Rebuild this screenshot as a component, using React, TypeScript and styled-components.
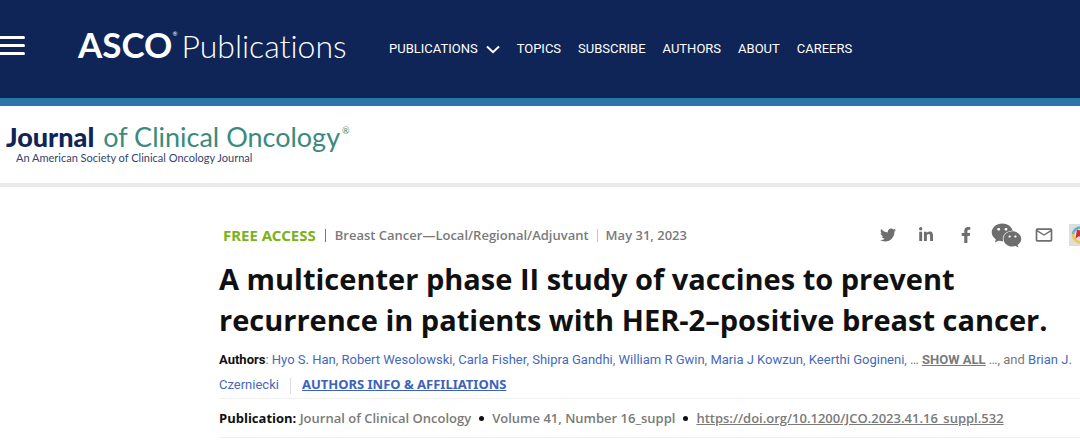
import React from "react";
import styled, { createGlobalStyle } from "styled-components";
import { FaFacebookF, FaLinkedinIn, FaTwitter, FaWeixin } from "react-icons/fa";
import { MdMailOutline } from "react-icons/md";

const humanist = '"Open Sans", "Noto Sans", sans-serif';
const capitals = '"Noto Sans", "Open Sans", sans-serif';
const roboto = 'Roboto, "Liberation Sans", sans-serif';
const geometric = 'Lato, "Open Sans", sans-serif';

const GlobalStyle = createGlobalStyle`
  *, *::before, *::after { box-sizing: border-box; }
  body { margin: 0; background: #fff; color: #7a7a7a; font-family: ${humanist}; overflow-x: hidden; }
  a { color: inherit; text-decoration: none; }
  button { padding: 0; border: 0; background: none; font: inherit; color: inherit; cursor: pointer; }
`;

const TopBar = styled.header`
  display: flex;
  align-items: center;
  min-height: 106px;
  padding-bottom: 8px;
  background: #0f2557;
  border-bottom: 8px solid #2a76a9;
  color: #fff;
`;

const MenuButton = styled.button`
  display: flex;
  flex-direction: column;
  gap: 5px;
  width: 25px;
  margin-right: 53px;
`;

const MenuLine = styled.span`
  height: 3px;
  border-radius: 0 2px 2px 0;
  background: #fff;
`;

const Brand = styled.a`
  display: flex;
  align-items: baseline;
  width: 311px;
  font-family: ${geometric};
  font-size: 35px;
  line-height: 40px;
  font-variant-ligatures: none;
  white-space: nowrap;
`;

const BrandStrong = styled.b`
  font-weight: 700;
`;

const Mark = styled.sup<{ $size: number }>`
  align-self: flex-start;
  font-size: ${(p) => p.$size}px;
  line-height: 20px;
  font-weight: 400;
  vertical-align: top;
`;

const BrandLight = styled.span`
  margin-left: 4px;
  font-size: 32px;
  font-weight: 300;
`;

const Nav = styled.nav`
  display: flex;
  align-items: center;
  gap: 17px;
  padding-top: 8px;
  font-family: ${roboto};
  font-size: 13px;
  line-height: 20px;
`;

const NavLink = styled.a`
  display: flex;
  align-items: center;
  gap: 8px;
  white-space: nowrap;
`;

const JournalBar = styled.section`
  min-height: 81px;
  padding: 15px 6px 0;
  border-bottom: 4px solid #eaeaea;
  font-family: ${geometric};
`;

const JournalName = styled.a`
  display: flex;
  gap: 2px;
  color: #3a8a7e;
  font-size: 27px;
  line-height: 31px;
  white-space: pre;
`;

const JournalStrong = styled.b`
  color: #0f2557;
  font-weight: 900;
`;

const Tagline = styled.p`
  margin: 0 0 0 10px;
  color: #34446f;
  font-size: 11px;
  line-height: 12px;
`;

const Article = styled.main`
  padding: 32px 0 0 219px;
`;

const MetaRow = styled.div`
  display: flex;
  align-items: center;
  justify-content: space-between;
  min-height: 32px;
`;

const Meta = styled.div`
  display: flex;
  align-items: center;
  padding-left: 4px;
  font-size: 13px;
  line-height: 20px;
  font-weight: 600;
  white-space: nowrap;
`;

const Access = styled.span`
  color: #7ab317;
  font-family: ${capitals};
  font-size: 15px;
  font-weight: 700;
`;

const Divider = styled.span<{ $color: string; $height: number; $gap: number }>`
  display: inline-block;
  width: 1px;
  height: ${(p) => p.$height}px;
  margin: 0 ${(p) => p.$gap}px;
  background: ${(p) => p.$color};
  vertical-align: middle;
`;

const ShareList = styled.div`
  display: flex;
  align-items: center;
  color: #6e6e6e;
`;

const ShareLink = styled.a<{ $gap: number }>`
  display: flex;
  margin-right: ${(p) => p.$gap}px;
`;

const Title = styled.h1`
  margin: 7px 0 0;
  color: #101010;
  font-size: 29px;
  line-height: 41px;
  font-weight: 700;
`;

const Authors = styled.div`
  margin-top: 7px;
  padding-bottom: 1px;
  border-bottom: 1px solid #f0f0f0;
  font-family: ${roboto};
  font-size: 13px;
  line-height: 25px;
`;

const Label = styled.b`
  color: #101010;
  font-weight: 700;
`;

const AuthorLink = styled.a`
  color: #4469bd;
`;

const ShowAll = styled.button`
  font-weight: 700;
  text-decoration: underline;
`;

const InfoLink = styled.a`
  color: #3c62bb;
  font-family: ${capitals};
  font-size: 13px;
  line-height: 20px;
  font-weight: 700;
  text-decoration: underline;
`;

const Publication = styled.div`
  display: flex;
  align-items: center;
  min-height: 39px;
  border-bottom: 1px solid #f0f0f0;
  font-size: 13px;
  line-height: 20px;
  font-weight: 600;
  white-space: pre;
`;

const Dot = styled.span`
  width: 5px;
  height: 5px;
  margin: 0 8px;
  border-radius: 50%;
  background: #101010;
`;

const DoiLink = styled.a`
  text-decoration: underline;
`;

const navItems = ["TOPICS", "SUBSCRIBE", "AUTHORS", "ABOUT", "CAREERS"];
const authors = [
  "Hyo S. Han",
  "Robert Wesolowski",
  "Carla Fisher",
  "Shipra Gandhi",
  "William R Gwin",
  "Maria J Kowzun",
  "Keerthi Gogineni",
];

function CrossmarkIcon() {
  return (
    <svg width="11" height="22" viewBox="0 0 11 22" aria-hidden="true">
      <rect width="11" height="22" fill="#dedede" />
      <path d="M11 3.5A8 8 0 0 0 4 10" fill="none" stroke="#5bb8d4" strokeWidth="2.5" />
      <path d="M4 10A8 8 0 0 0 11 18.5" fill="none" stroke="#efc94c" strokeWidth="2.5" />
      <path d="M8 5.5L11 6.5V13L10 12L6.5 14.5Z" fill="#d6293a" />
    </svg>
  );
}

export default function App() {
  return (
    <>
      <GlobalStyle />
      <TopBar>
        <MenuButton aria-label="Menu">
          <MenuLine />
          <MenuLine />
          <MenuLine />
        </MenuButton>
        <Brand href="#">
          <BrandStrong>ASCO</BrandStrong>
          <Mark $size={6}>®</Mark>
          <BrandLight>Publications</BrandLight>
        </Brand>
        <Nav>
          <NavLink href="#">
            PUBLICATIONS
            <svg width="14" height="9" viewBox="0 0 14 9" aria-hidden="true">
              <path d="M1 1.5L7 7.2L13 1.5" fill="none" stroke="#fff" strokeWidth="2" />
            </svg>
          </NavLink>
          {navItems.map((item) => (
            <NavLink href="#" key={item}>
              {item}
            </NavLink>
          ))}
        </Nav>
      </TopBar>
      <JournalBar>
        <JournalName href="#">
          <JournalStrong>Journal</JournalStrong>
          <span> of Clinical Oncology</span>
          <Mark $size={9}>®</Mark>
        </JournalName>
        <Tagline>An American Society of Clinical Oncology Journal</Tagline>
      </JournalBar>
      <Article>
        <MetaRow>
          <Meta>
            <Access>FREE ACCESS</Access>
            <Divider $color="#7a7a7a" $height={13} $gap={9} />
            Breast Cancer—Local/Regional/Adjuvant
            <Divider $color="#c4c4c4" $height={13} $gap={8} />
            May 31, 2023
          </Meta>
          <ShareList>
            <ShareLink href="#" aria-label="Twitter" $gap={22}>
              <FaTwitter size={16} />
            </ShareLink>
            <ShareLink href="#" aria-label="LinkedIn" $gap={24}>
              <FaLinkedinIn size={16} />
            </ShareLink>
            <ShareLink href="#" aria-label="Facebook" $gap={17}>
              <FaFacebookF size={16} />
            </ShareLink>
            <ShareLink href="#" aria-label="WeChat" $gap={12}>
              <FaWeixin size={31} />
            </ShareLink>
            <ShareLink href="#" aria-label="Email" $gap={15}>
              <MdMailOutline size={20} />
            </ShareLink>
            <ShareLink href="#" aria-label="Crossmark" $gap={0}>
              <CrossmarkIcon />
            </ShareLink>
          </ShareList>
        </MetaRow>
        <Title>
          A multicenter phase II study of vaccines to prevent recurrence in patients with HER-2–positive
          breast cancer.
        </Title>
        <Authors>
          <Label>Authors</Label>:{" "}
          {authors.map((name) => (
            <React.Fragment key={name}>
              <AuthorLink href="#">{name}</AuthorLink>,{" "}
            </React.Fragment>
          ))}
          … <ShowAll>SHOW ALL</ShowAll> …, and <AuthorLink href="#">Brian J. Czerniecki</AuthorLink>
          <Divider $color="#dddddd" $height={16} $gap={11} />
          <InfoLink href="#">AUTHORS INFO &amp; AFFILIATIONS</InfoLink>
        </Authors>
        <Publication>
          <Label>Publication: </Label>
          <span>Journal of Clinical Oncology</span>
          <Dot />
          <span>Volume 41, Number 16_suppl</span>
          <Dot />
          <DoiLink href="#">https://doi.org/10.1200/JCO.2023.41.16_suppl.532</DoiLink>
        </Publication>
      </Article>
    </>
  );
}
